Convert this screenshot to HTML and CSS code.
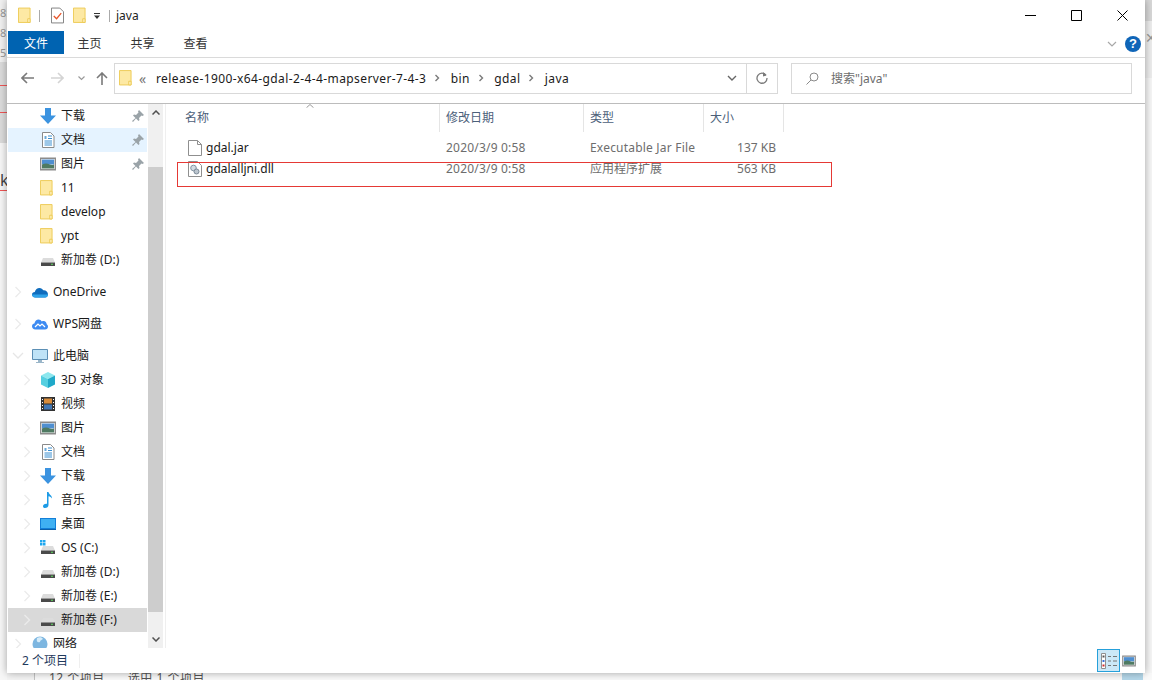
FILE: index.html
```html
<!DOCTYPE html>
<html lang="zh-CN">
<head>
    <meta charset="UTF-8">
    <title>java</title>
    <link rel="stylesheet" href="styles.css">
</head>
<body>
    <svg class="defs" width="0" height="0">
        <symbol id="i-folder" viewBox="0 0 14 17">
            <path d="M.5.5h12.5v15.5H.5z" fill="#fde9a4" stroke="#edc952"/>
            <path d="M10.5 16v-4h2.500v4z" fill="#fff3c4" stroke="#edc952"/>
        </symbol>
        <symbol id="i-check" viewBox="0 0 14 17">
            <path d="M.5.5h9l4 4v12H.5z" fill="#fff" stroke="#7a7a7a"/>
            <path d="M3 9l3 3 5-6" fill="none" stroke="#e8562a" stroke-width="1.400"/>
        </symbol>
        <symbol id="i-down" viewBox="0 0 16 16">
            <path d="M5 0h6v7.500h5L8 16 0 7.500h5z" fill="#3b93e0"/>
        </symbol>
        <symbol id="i-doc" viewBox="0 0 16 16">
            <path d="M2.500.5h8l3.500 3.500v11.500H2.500z" fill="#fff" stroke="#8a8a8a"/>
            <path d="M8 4h4M8 6.500h4M4.500 9h7.500M4.500 11h7.500M4.500 13h7.500" stroke="#3a8fd0"/>
            <path d="M4.500 4h2v3h-2z" fill="#6aa9d8"/>
        </symbol>
        <symbol id="i-pic" viewBox="0 0 16 14">
            <path d="M.7 1.200h14.600v11.600H.7z" fill="#fff" stroke="#8c8c8c" stroke-width="1.400"/>
            <path d="M2 2.500h12v5H2z" fill="#4f8fd0"/>
            <path d="M2 7.500c3-1.500 5-1.500 8 0 1.500.5 3 .5 4 0v4H2z" fill="#4f7a62"/>
        </symbol>
        <symbol id="i-drive" viewBox="0 0 16 16">
            <path d="M3 6h10l2 4.500H1z" fill="#dcdcdc"/>
            <path d="M1 10.500h14V14H1z" fill="#4a4a4a"/>
            <path d="M11 11.700h2v1h-2z" fill="#5fe05f"/>
        </symbol>
        <symbol id="i-osdrive" viewBox="0 0 16 16">
            <path d="M0 0h2.500v2.500H0zM3 0h2.500v2.500H3zM0 3h2.500v2.500H0zM3 3h2.500v2.500H3z" fill="#1ea7ef"/>
            <path d="M3 6h10l2 4.500H1z" fill="#dcdcdc"/>
            <path d="M1 10.500h14V14H1z" fill="#4a4a4a"/>
            <path d="M11 11.700h2v1h-2z" fill="#5fe05f"/>
        </symbol>
        <symbol id="i-onedrive" viewBox="0 0 16 11">
            <path d="M3.500 10.500C1 10.500 0 9 0 7.500 0 6 1.200 5 2.800 5 3.500 2.500 5.200 1 7.500 1c1.800 0 3 1 3.800 2.300 2.500-.3 4.700 1.500 4.700 4 0 1.800-1.200 3.200-3 3.200z" fill="#0f6cbd"/>
            <path d="M3.500 10.500C1 10.500 0 9 0 7.500h16c0 1.800-1.200 3-3 3z" fill="#2ea3ea"/>
        </symbol>
        <symbol id="i-wps" viewBox="0 0 16 11">
            <path d="M3.500 10.500C1.300 10.500 0 9 0 7.300 0 5.800 1 4.800 2.400 4.600 3 2 4.600.5 6.500.5c1.500 0 2.600.8 3.300 2 .6-.4 1.200-.5 1.900-.5 1.700 0 2.900 1.500 3 3.200.8.500 1.300 1.300 1.300 2.300 0 1.700-1.200 3-3 3z" fill="#3d8bf2"/>
            <path d="M3 8l3-3 2 2 2-2 3 3" fill="none" stroke="#fff" stroke-width="1.200"/>
        </symbol>
        <symbol id="i-pc" viewBox="0 0 16 16">
            <path d="M.5 1.500h15v10H.5z" fill="#bfe3f7" stroke="#5c8fb5"/>
            <path d="M6 12h4v2H6zM4 14h8v1H4z" fill="#9ab6c9"/>
        </symbol>
        <symbol id="i-cube" viewBox="0 0 16 16">
            <path d="M8 0l7 3.500-7 3.500-7-3.500z" fill="#8ce7ee"/>
            <path d="M1 3.500l7 3.500v9l-7-3.500z" fill="#55cfe0"/>
            <path d="M15 3.500L8 7v9l7-3.500z" fill="#1fa9c9"/>
        </symbol>
        <symbol id="i-video" viewBox="0 0 16 16">
            <path d="M1 1h14v14H1z" fill="#333"/>
            <path d="M4 2.500h8v5H4z" fill="#d98c3b"/>
            <path d="M4 8.500h8v5H4z" fill="#4277b5"/>
            <path d="M2 3h1v1H2zM2 6h1v1H2zM2 9h1v1H2zM2 12h1v1H2zM13 3h1v1h-1zM13 6h1v1h-1zM13 9h1v1h-1zM13 12h1v1h-1z" fill="#fff"/>
        </symbol>
        <symbol id="i-music" viewBox="0 0 16 16">
            <path d="M7 0h1.500c.3 2.500 3.500 3 3.500 6.500-.7-1.200-2-2-3.500-2.200V13c0 1.800-1.500 3-3.500 3-1.300 0-2-.8-2-1.800C3 12.800 4.600 11.500 7 11.800z" fill="#1d9be6"/>
        </symbol>
        <symbol id="i-desk" viewBox="0 0 16 14">
            <path d="M0 1h16v11H0z" fill="#137fd8"/>
            <path d="M1 2h14v9H1z" fill="#3fb0f2"/>
            <path d="M0 12h16v1H0z" fill="#0d5fa8"/>
        </symbol>
        <symbol id="i-net" viewBox="0 0 16 16">
            <circle cx="8" cy="8" r="7.500" fill="#7db6e0"/>
            <path d="M5 2c2-1 5-1 6 1-1 1-3 1-3 3-2 1-4 0-3-4z" fill="#d6ecf9"/>
        </symbol>
        <symbol id="i-pin" viewBox="0 0 12 12">
            <path d="M7 0l5 5-1.500 1L9.500 5.500 7 8l.5 2-1 1-2.500-2.500L1 12 0 11l3.500-3L1 5.500l1-1 2 .5L6.500 2.500 6 1.500z" fill="#9aa3a8"/>
        </symbol>
        <symbol id="i-chev" viewBox="0 0 8 12">
            <path d="M1.500 1l5 5-5 5" fill="none" stroke="#ebebeb" stroke-width="1.300"/>
        </symbol>
        <symbol id="i-open" viewBox="0 0 12 8">
            <path d="M1 1l5 5 5-5" fill="none" stroke="#e6e6e6" stroke-width="1.300"/>
        </symbol>
        <symbol id="i-crumb" viewBox="0 0 6 8">
            <path d="M1.500 1l3 3-3 3" fill="none" stroke="#7a7a7a" stroke-width="1.400"/>
        </symbol>
        <symbol id="i-file" viewBox="0 0 14 16">
            <path d="M.5.500h9l4 4v11H.5z" fill="#fff" stroke="#8f8f8f"/>
            <path d="M9.500.5v4h4" fill="none" stroke="#8f8f8f"/>
        </symbol>
        <symbol id="i-dll" viewBox="0 0 14 16">
            <path d="M.5.500h9l4 4v11H.5z" fill="#fff" stroke="#8f8f8f"/>
            <circle cx="5.500" cy="7" r="2.800" fill="#d3dbe2" stroke="#8494a3"/>
            <circle cx="8.500" cy="10.500" r="2.500" fill="#bcc6cf" stroke="#7a8896"/>
        </symbol>
    </svg>

    <!-- what shows around the window -->
    <div class="back-left">
        <div class="back-top">
            <span>8:</span>
            <span>8:</span>
            <span>5:</span>
        </div>
        <div class="back-k">k</div>
    </div>
    <div class="back-right">
        <span class="back-x">&#10005;</span>
    </div>
    <div class="back-bottom">
        <span class="back-status">12 个项目</span>
        <span class="back-status">选中 1 个项目</span>
    </div>
    <div class="back-view"></div>

    <div class="window">
        <!-- Title bar -->
        <div class="titlebar">
            <svg class="qa-first" width="13" height="17"><use href="#i-folder"/></svg>
            <span class="qa-sep"></span>
            <svg class="qa-check" width="13" height="17"><use href="#i-check"/></svg>
            <svg class="qa-folder" width="13" height="17"><use href="#i-folder"/></svg>
            <svg class="qa-menu" width="8" height="8" viewBox="0 0 8 8"><path d="M1 1h6v1H1zM1 3.500h6L4 7z" fill="#333"/></svg>
            <span class="qa-sep qa-sep-last"></span>
            <span class="title">java</span>
            <div class="winbtns">
                <div class="winbtn"><svg width="11" height="11" viewBox="0 0 11 11"><path d="M0 5.500h11" stroke="#000"/></svg></div>
                <div class="winbtn"><svg width="11" height="11" viewBox="0 0 11 11"><path d="M.5.500h10v10H.5z" fill="none" stroke="#000"/></svg></div>
                <div class="winbtn"><svg width="11" height="11" viewBox="0 0 11 11"><path d="M.5.500l10 10M10.500.500l-10 10" stroke="#000"/></svg></div>
            </div>
        </div>

        <!-- Ribbon tabs -->
        <div class="tabs">
            <div class="tab tab-file">文件</div>
            <div class="tab">主页</div>
            <div class="tab">共享</div>
            <div class="tab">查看</div>
            <svg class="ribbon-toggle" width="10" height="6" viewBox="0 0 10 6"><path d="M1 1l4 4 4-4" fill="none" stroke="#a8a8a8" stroke-width="1.200"/></svg>
            <div class="help">?</div>
        </div>

        <!-- Address row -->
        <div class="addressrow">
            <svg class="nav-btn nav-back" width="13" height="12" viewBox="0 0 13 12"><path d="M6 1L1 6l5 5M1 6h12" fill="none" stroke="#7a7a7a" stroke-width="1.600"/></svg>
            <svg class="nav-btn nav-forward" width="13" height="12" viewBox="0 0 13 12"><path d="M7 1l5 5-5 5M12 6H0" fill="none" stroke="#d4d4d4" stroke-width="1.600"/></svg>
            <svg class="nav-btn nav-recent" width="7" height="5" viewBox="0 0 7 5"><path d="M.5.500l3 3 3-3" fill="none" stroke="#9a9a9a" stroke-width="1.200"/></svg>
            <svg class="nav-btn nav-up" width="12" height="13" viewBox="0 0 12 13"><path d="M1 6l5-5 5 5M6 1v12" fill="none" stroke="#7a7a7a" stroke-width="1.600"/></svg>
            <div class="addressbox">
                <svg class="addr-folder" width="13" height="16"><use href="#i-folder"/></svg>
                <span class="addr-more">«</span>
                <span class="crumb">release-1900-x64-gdal-2-4-4-mapserver-7-4-3</span>
                <svg class="crumb-sep" width="6" height="8"><use href="#i-crumb"/></svg>
                <span class="crumb">bin</span>
                <svg class="crumb-sep" width="6" height="8"><use href="#i-crumb"/></svg>
                <span class="crumb">gdal</span>
                <svg class="crumb-sep" width="6" height="8"><use href="#i-crumb"/></svg>
                <span class="crumb">java</span>
                <svg class="addr-drop" width="10" height="6" viewBox="0 0 10 6"><path d="M1 1l4 4 4-4" fill="none" stroke="#666" stroke-width="1.400"/></svg>
                <div class="addr-refresh">
                    <svg width="12" height="12" viewBox="0 0 12 12"><path d="M10 3.200A5 5 0 1 0 11 6" fill="none" stroke="#7a7a7a" stroke-width="1.300"/><path d="M7 0l3.500 3.500L7 4.500z" fill="#7a7a7a"/></svg>
                </div>
            </div>
            <div class="searchbox">
                <svg width="13" height="13" viewBox="0 0 13 13"><circle cx="8" cy="5" r="4" fill="none" stroke="#8a8a8a"/><path d="M5 8l-4.500 4.500" stroke="#8a8a8a"/></svg>
                <span>搜索"java"</span>
            </div>
        </div>

        <!-- Sidebar + file list -->
        <div class="content">
            <div class="sidebar">
                <ul class="tree">
                    <li class="row sub"><span class="chev"></span><svg width="16" height="16"><use href="#i-down"/></svg><span class="lbl">下载</span><svg class="pin" width="12" height="12"><use href="#i-pin"/></svg></li>
                    <li class="row sub hover"><span class="chev"></span><svg width="16" height="16"><use href="#i-doc"/></svg><span class="lbl">文档</span><svg class="pin" width="12" height="12"><use href="#i-pin"/></svg></li>
                    <li class="row sub"><span class="chev"></span><svg width="16" height="14"><use href="#i-pic"/></svg><span class="lbl">图片</span><svg class="pin" width="12" height="12"><use href="#i-pin"/></svg></li>
                    <li class="row sub"><span class="chev"></span><svg class="tree-folder" width="13" height="16"><use href="#i-folder"/></svg><span class="lbl">11</span></li>
                    <li class="row sub"><span class="chev"></span><svg class="tree-folder" width="13" height="16"><use href="#i-folder"/></svg><span class="lbl">develop</span></li>
                    <li class="row sub"><span class="chev"></span><svg class="tree-folder" width="13" height="16"><use href="#i-folder"/></svg><span class="lbl">ypt</span></li>
                    <li class="row sub"><span class="chev"></span><svg width="16" height="16"><use href="#i-drive"/></svg><span class="lbl">新加卷 (D:)</span></li>
                    <li class="row top group"><svg class="chev" width="8" height="12"><use href="#i-chev"/></svg><svg width="16" height="11"><use href="#i-onedrive"/></svg><span class="lbl">OneDrive</span></li>
                    <li class="row top group"><svg class="chev" width="8" height="12"><use href="#i-chev"/></svg><svg width="16" height="11"><use href="#i-wps"/></svg><span class="lbl">WPS网盘</span></li>
                    <li class="row top group"><svg class="chev chev-open" width="12" height="8"><use href="#i-open"/></svg><svg width="16" height="16"><use href="#i-pc"/></svg><span class="lbl">此电脑</span></li>
                    <li class="row sub"><svg class="chev" width="8" height="12"><use href="#i-chev"/></svg><svg width="16" height="16"><use href="#i-cube"/></svg><span class="lbl">3D 对象</span></li>
                    <li class="row sub"><svg class="chev" width="8" height="12"><use href="#i-chev"/></svg><svg width="16" height="16"><use href="#i-video"/></svg><span class="lbl">视频</span></li>
                    <li class="row sub"><svg class="chev" width="8" height="12"><use href="#i-chev"/></svg><svg width="16" height="14"><use href="#i-pic"/></svg><span class="lbl">图片</span></li>
                    <li class="row sub"><svg class="chev" width="8" height="12"><use href="#i-chev"/></svg><svg width="16" height="16"><use href="#i-doc"/></svg><span class="lbl">文档</span></li>
                    <li class="row sub"><svg class="chev" width="8" height="12"><use href="#i-chev"/></svg><svg width="16" height="16"><use href="#i-down"/></svg><span class="lbl">下载</span></li>
                    <li class="row sub"><svg class="chev" width="8" height="12"><use href="#i-chev"/></svg><svg width="16" height="16"><use href="#i-music"/></svg><span class="lbl">音乐</span></li>
                    <li class="row sub"><svg class="chev" width="8" height="12"><use href="#i-chev"/></svg><svg width="16" height="14"><use href="#i-desk"/></svg><span class="lbl">桌面</span></li>
                    <li class="row sub"><svg class="chev" width="8" height="12"><use href="#i-chev"/></svg><svg width="16" height="16"><use href="#i-osdrive"/></svg><span class="lbl">OS (C:)</span></li>
                    <li class="row sub"><svg class="chev" width="8" height="12"><use href="#i-chev"/></svg><svg width="16" height="16"><use href="#i-drive"/></svg><span class="lbl">新加卷 (D:)</span></li>
                    <li class="row sub"><svg class="chev" width="8" height="12"><use href="#i-chev"/></svg><svg width="16" height="16"><use href="#i-drive"/></svg><span class="lbl">新加卷 (E:)</span></li>
                    <li class="row sub active"><svg class="chev" width="8" height="12"><use href="#i-chev"/></svg><svg width="16" height="16"><use href="#i-drive"/></svg><span class="lbl">新加卷 (F:)</span></li>
                    <li class="row top group-net"><svg class="chev" width="8" height="12"><use href="#i-chev"/></svg><svg width="16" height="16"><use href="#i-net"/></svg><span class="lbl">网络</span></li>
                </ul>
                <div class="scrollbar">
                    <div class="sb-btn"><svg width="8" height="5" viewBox="0 0 8 5"><path d="M.5 4.500L4 1l3.500 3.500" fill="none" stroke="#505050" stroke-width="1.500"/></svg></div>
                    <div class="sb-track"><div class="sb-thumb"></div></div>
                    <div class="sb-btn"><svg width="8" height="5" viewBox="0 0 8 5"><path d="M.5.500L4 4 7.500.500" fill="none" stroke="#505050" stroke-width="1.500"/></svg></div>
                </div>
            </div>

            <div class="files">
                <svg class="sort" width="8" height="4" viewBox="0 0 8 4"><path d="M.5 3.700L4 .5l3.500 3.200" fill="none" stroke="#9a9a9a"/></svg>
                <div class="file-head">
                    <div class="col">名称</div>
                    <div class="col">修改日期</div>
                    <div class="col">类型</div>
                    <div class="col">大小</div>
                </div>
                <div class="file-row">
                    <div class="name"><svg width="14" height="16"><use href="#i-file"/></svg>gdal.jar</div>
                    <div class="latin">2020/3/9 0:58</div>
                    <div class="latin">Executable Jar File</div>
                    <div class="size">137 KB</div>
                </div>
                <div class="file-row">
                    <div class="name"><svg width="14" height="16"><use href="#i-dll"/></svg>gdalalljni.dll</div>
                    <div class="latin">2020/3/9 0:58</div>
                    <div>应用程序扩展</div>
                    <div class="size">563 KB</div>
                </div>
                <div class="redbox"></div>
            </div>
        </div>

        <!-- Status bar -->
        <div class="statusbar">
            <span class="count">2 个项目</span>
            <span class="status-sep"></span>
            <div class="viewbtn viewbtn-on">
                <svg width="16" height="16" viewBox="0 0 16 16">
                    <path d="M.5.500h4v15h-4z" fill="#fff" stroke="#8f8f8f"/>
                    <path d="M1.500 2.500h2v2h-2z" fill="#555"/><path d="M1.500 7h2v2h-2z" fill="#3a6fd8"/><path d="M1.500 11.500h2v2h-2z" fill="#d02b2b"/>
                    <path d="M7 3.500h3M12 3.500h4M7 8h3M12 8h4M7 12.500h3M12 12.500h4" stroke="#777"/>
                </svg>
            </div>
            <div class="viewbtn viewbtn-preview">
                <svg width="14" height="12"><use href="#i-pic"/></svg>
            </div>
        </div>
    </div>
</body>
</html>
```

FILE: styles.css
```css
* {
    box-sizing: border-box;
}

html, body {
    margin: 0;
    height: 100%;
}

body {
    position: relative;
    width: 1152px;
    height: 680px;
    overflow: hidden;
    background: #f4f4f4;
    font-family: "Noto Sans", "Noto Sans CJK SC", sans-serif;
    font-size: 12px;
    color: #1a1a1a;
}

.defs {
    position: absolute;
}

svg {
    display: block;
    flex: none;
}

/* Behind the window */
.back-left {
    position: absolute;
    left: 0;
    top: 0;
    width: 7px;
    height: 680px;
    overflow: hidden;
    background: linear-gradient(#f1f1f1 0, #f1f1f1 62px, #dcdcdc 62px, #dcdcdc 85px, #e55 85px, #e55 86px, #dcdcdc 86px, #dcdcdc 112px, #e55 112px, #e55 113px, #dcdcdc 113px, #dcdcdc 143px, #f7f7f7 143px);
}

.back-top {
    display: flex;
    flex-direction: column;
    gap: 7px;
    padding-top: 6px;
    color: #999;
    font-size: 11px;
    line-height: 13px;
}

.back-k {
    position: absolute;
    top: 170px;
    left: 0;
    font-size: 16px;
    line-height: 20px;
    color: #444;
    border-bottom: 1px solid #e55;
}

.back-right {
    position: absolute;
    right: 0;
    top: 0;
    width: 7px;
    height: 680px;
    background: linear-gradient(#d8d8d8 0, #d8d8d8 21px, #eee 21px, #eee 78px, #f7f7f7 78px);
    overflow: hidden;
}

.back-x {
    position: absolute;
    left: 0;
    top: 28px;
    font-size: 14px;
    color: #999;
}

.back-bottom {
    position: absolute;
    left: 34px;
    right: 0;
    top: 673px;
    height: 7px;
    display: flex;
    gap: 23px;
    padding-left: 14px;
    border-left: 1px solid #c4c4c4;
    overflow: hidden;
    background: #fafafa;
    color: #555;
    line-height: 12px;
    letter-spacing: 0.5px;
}

.back-status {
    position: relative;
    top: -1px;
}

.back-view {
    position: absolute;
    left: 1122px;
    top: 673px;
    width: 21px;
    height: 7px;
    background: #b5d8ea;
}

/* Window */
.window {
    position: absolute;
    left: 7px;
    top: 0;
    width: 1138px;
    height: 673px;
    display: flex;
    flex-direction: column;
    background: #fff;
    box-shadow: 0 0 8px rgba(0, 0, 0, 0.35);
}

.titlebar {
    height: 31px;
    display: flex;
    align-items: center;
    flex: none;
}

.qa-first {
    margin-left: 11px;
    margin-right: 8px;
}

.qa-sep {
    width: 1px;
    height: 12px;
    margin-right: 11px;
    background: #aaa;
}

.qa-sep-last {
    margin-right: 6px;
}

.qa-check {
    margin-right: 9px;
}

.qa-folder {
    margin-right: 7px;
}

.qa-menu {
    margin-right: 8px;
}

.title {
    font-size: 12px;
    color: #222;
}

.winbtns {
    margin-left: auto;
    display: flex;
    align-self: flex-start;
}

.winbtn {
    width: 46px;
    height: 30px;
    display: flex;
    align-items: center;
    justify-content: center;
}

/* Ribbon */
.tabs {
    height: 27px;
    flex: none;
    display: flex;
    align-items: flex-start;
    padding-left: 1px;
    border-bottom: 1px solid #dadada;
}

.tab {
    height: 23px;
    line-height: 25px;
    padding: 0 14.500px;
    color: #333;
}

.tab-file {
    width: 56px;
    padding: 0;
    margin-right: -1px;
    text-align: center;
    background: #0063b1;
    color: #fff;
}

.ribbon-toggle {
    margin-left: auto;
    margin-top: 10px;
    margin-right: 8px;
}

.help {
    width: 16px;
    height: 16px;
    margin-top: 5px;
    margin-right: 4px;
    border-radius: 50%;
    background: #0f65b8;
    color: #fff;
    font-family: "Liberation Sans", sans-serif;
    font-weight: 700;
    font-size: 13px;
    line-height: 16px;
    text-align: center;
}

/* Address row */
.addressrow {
    height: 46px;
    flex: none;
    display: flex;
    align-items: center;
    padding-bottom: 10px;
    padding-top: 5px;
    border-bottom: 1px solid #bcbcbc;
}

.nav-back {
    margin-left: 14px;
}

.nav-forward {
    margin-left: 17px;
}

.nav-recent {
    margin-left: 14px;
}

.nav-up {
    margin-left: 11px;
}

.addressbox {
    width: 664px;
    height: 31px;
    margin-left: 6px;
    display: flex;
    align-items: center;
    padding-left: 4px;
    border: 1px solid #d9d9d9;
}

.addr-more {
    margin-left: 7px;
    margin-right: 8px;
    width: 9px;
    font-size: 14px;
    color: #777;
}

.crumb {
    color: #1a1a1a;
    letter-spacing: 0.4px;
}

.crumb-sep {
    margin: 0 10.400px 0 8px;
}

.addr-drop {
    margin-left: auto;
    margin-right: 9px;
}

.addr-refresh {
    width: 31px;
    height: 29px;
    display: flex;
    align-items: center;
    justify-content: center;
    border-left: 1px solid #d9d9d9;
}

.searchbox {
    width: 341px;
    height: 31px;
    margin-left: 13px;
    display: flex;
    align-items: center;
    gap: 12px;
    padding-left: 14px;
    border: 1px solid #d9d9d9;
    color: #6d6d6d;
}

/* Content */
.content {
    flex: 1;
    min-height: 0;
    display: flex;
}

.sidebar {
    width: 159px;
    display: flex;
    border-right: 1px solid #efefef;
}

.tree {
    list-style: none;
    margin: 0 0 0 1px;
    padding: 0;
    width: 139px;
    height: 100%;
    overflow: hidden;
}

.row {
    height: 24px;
    display: flex;
    align-items: center;
}

.row.sub {
    padding-left: 15px;
}

.row.top {
    padding-left: 6px;
}

.row.group {
    margin-top: 8px;
}

.row.group + .row.sub {
    margin-top: 0;
}

.group-net {
    margin-top: 0;
}

.chev {
    display: block;
    width: 8px;
    margin-right: 9px;
}

.row.top .chev {
    margin-right: 10px;
}

.row.top .chev-open {
    width: 12px;
    margin-left: -2px;
    margin-right: 8px;
}

.lbl {
    margin-left: 5px;
    margin-bottom: 2px;
    white-space: nowrap;
}

.tree-folder {
    margin-right: 3px;
}

.pin {
    margin-left: auto;
    margin-right: 3px;
}

.hover {
    background: #e5f3ff;
}

.active {
    background: #d9d9d9;
}

.scrollbar {
    width: 15px;
    margin-left: 1px;
    background: #f0f0f0;
    display: flex;
    flex-direction: column;
}

.sb-btn {
    height: 17px;
    flex: none;
    display: flex;
    align-items: center;
    justify-content: center;
}

.sb-track {
    flex: 1;
    padding-top: 46px;
    padding-bottom: 19px;
}

.sb-thumb {
    height: 100%;
    background: #cdcdcd;
}

/* File list */
.files {
    flex: 1;
    position: relative;
    padding-left: 12px;
}

.sort {
    position: absolute;
    left: 140px;
    top: 0;
}

.file-head,
.file-row {
    display: grid;
    grid-template-columns: 262px 144px 120px 80px;
}

.file-head {
    height: 26px;
}

.file-head .col {
    line-height: 28px;
    padding-left: 6px;
    color: #4c607a;
    border-right: 1px solid #e5e5e5;
}

.file-head .col:first-child {
    padding-left: 7px;
}

.file-row {
    height: 21px;
    line-height: 21px;
    color: #6d6d6d;
}

.file-head + .file-row {
    margin-top: 7px;
}

.file-row > div {
    padding-left: 6px;
    white-space: nowrap;
}

.file-row .latin {
    letter-spacing: 0.2px;
}

.file-row .name {
    display: flex;
    align-items: center;
    gap: 4px;
    padding-left: 10px;
    color: #1a1a1a;
}

.file-row .size {
    padding-left: 0;
    padding-right: 8px;
    text-align: right;
}

.redbox {
    position: absolute;
    left: 11px;
    top: 58px;
    width: 655px;
    height: 25px;
    border: 1px solid #e53935;
}

/* Status bar */
.statusbar {
    height: 25px;
    flex: none;
    display: flex;
    align-items: center;
    padding-left: 15px;
    padding-right: 7px;
    color: #1f3a5c;
}

.count {
    margin-bottom: 2px;
}

.status-sep {
    width: 1px;
    height: 14px;
    margin-left: 11px;
    background: #efefef;
}

.viewbtn {
    height: 23px;
    display: flex;
    align-items: center;
    justify-content: center;
}

.viewbtn-on {
    margin-left: auto;
    width: 23px;
    background: #cce8f7;
    border: 1px solid #26a0da;
}

.viewbtn-preview {
    width: 18px;
}
```
